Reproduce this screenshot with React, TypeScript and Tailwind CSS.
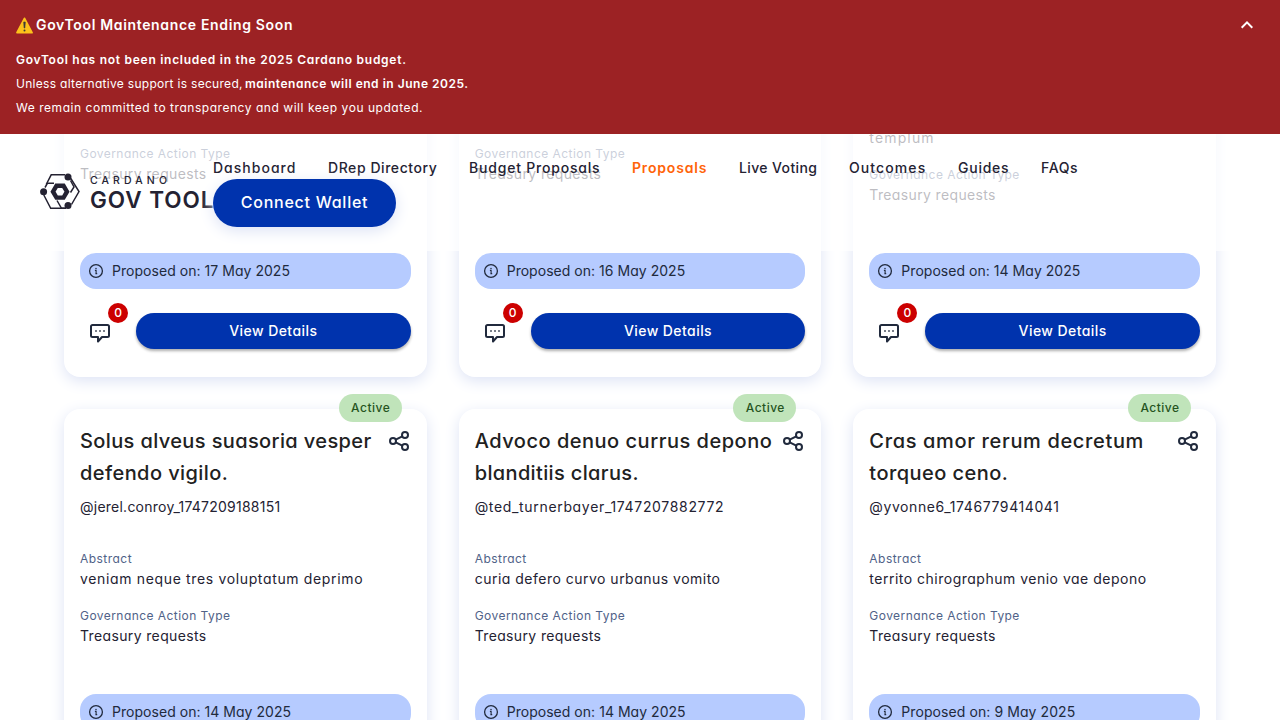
type Field = { text: string; tracking: string };

type Proposal = {
  title?: Field[];
  author?: Field;
  abstract?: Field;
  date: Field;
  /** Top padding used by cards whose heading is scrolled out of view. */
  offset?: string;
};

const proposals: Proposal[] = [
  { date: { text: "17 May 2025", tracking: "tracking-[0.04px]" }, offset: "pt-[178px]" },
  { date: { text: "16 May 2025", tracking: "tracking-[0.03px]" }, offset: "pt-[178px]" },
  {
    abstract: { text: "templum", tracking: "tracking-[1.15px]" },
    date: { text: "14 May 2025", tracking: "tracking-[0.035px]" },
    offset: "pt-[160px]",
  },
  {
    title: [
      { text: "Solus alveus suasoria vesper", tracking: "tracking-[0.38px]" },
      { text: "defendo vigilo.", tracking: "tracking-[0.43px]" },
    ],
    author: { text: "@jerel.conroy_1747209188151", tracking: "tracking-[0.24px]" },
    abstract: { text: "veniam neque tres voluptatum deprimo", tracking: "tracking-[0.65px]" },
    date: { text: "14 May 2025", tracking: "tracking-[0.035px]" },
  },
  {
    title: [
      { text: "Advoco denuo currus depono", tracking: "tracking-[0.51px]" },
      { text: "blanditiis clarus.", tracking: "tracking-[0.36px]" },
    ],
    author: { text: "@ted_turnerbayer_1747207882772", tracking: "tracking-[0.67px]" },
    abstract: { text: "curia defero curvo urbanus vomito", tracking: "tracking-[0.49px]" },
    date: { text: "14 May 2025", tracking: "tracking-[0.035px]" },
  },
  {
    title: [
      { text: "Cras amor rerum decretum", tracking: "tracking-[0.65px]" },
      { text: "torqueo ceno.", tracking: "tracking-[0.46px]" },
    ],
    author: { text: "@yvonne6_1746779414041", tracking: "tracking-[0.6px]" },
    abstract: { text: "territo chirographum venio vae depono", tracking: "tracking-[0.5px]" },
    date: { text: "9 May 2025", tracking: "tracking-[0.08px]" },
  },
];

const links = [
  { text: "Dashboard", style: "w-[83px] tracking-[1.02px] font-medium" },
  { text: "DRep Directory", style: "w-[109px] tracking-[0.56px] font-medium" },
  { text: "Budget Proposals", style: "w-[131px] tracking-[0.8px] font-medium" },
  { text: "Proposals", style: "w-[75px] tracking-[0.82px] font-semibold text-[#ff640a]" },
  { text: "Live Voting", style: "w-[78px] tracking-[0.37px] font-medium" },
  { text: "Outcomes", style: "w-[77px] tracking-[1.1px] font-medium" },
  { text: "Guides", style: "w-[51px] tracking-[0.75px] font-medium" },
  { text: "FAQs", style: "w-[37px] tracking-[0.65px] font-medium" },
];

function WarningIcon() {
  return (
    <svg width="17" height="17" viewBox="0 0 17 17" className="shrink-0">
      <path d="M8.5 1.4 16 15.6H1Z" fill="#fcc21b" stroke="#fcc21b" strokeWidth="1.8" strokeLinejoin="round" />
      <path d="M7.7 5h1.6L8.9 11H8.1Z" fill="#3a3a3a" stroke="#3a3a3a" strokeWidth=".6" strokeLinejoin="round" />
      <circle cx="8.5" cy="13.5" r="1" fill="#3a3a3a" />
    </svg>
  );
}

function ShareIcon() {
  return (
    <svg width="24" height="24" viewBox="0 0 24 24" fill="none" stroke="#212a3d" strokeWidth="2" className="shrink-0">
      <circle cx="6" cy="12" r="3" />
      <circle cx="18" cy="6" r="3" />
      <circle cx="18" cy="18" r="3" />
      <path d="m8.7 10.7 6.6-3.3M8.7 13.3l6.6 3.3" />
    </svg>
  );
}

function InfoIcon() {
  return (
    <svg width="16" height="16" viewBox="0 0 16 16" fill="none" stroke="#212a3d" strokeWidth="1.3" className="shrink-0">
      <circle cx="8" cy="8" r="6.4" />
      <path d="M6.9 7.4h1.2v3.2M7.4 10.6h1.8" strokeWidth="1.1" />
      <circle cx="8" cy="5.6" r=".75" fill="#212a3d" stroke="none" />
    </svg>
  );
}

function CommentIcon() {
  return (
    <svg width="24" height="24" viewBox="0 0 24 24" fill="none" stroke="#212a3d" strokeWidth="2" strokeLinejoin="round">
      <path d="M4.5 4h15A1.5 1.5 0 0 1 21 5.5v9a1.5 1.5 0 0 1-1.5 1.500H14L10 20.500V16H4.500A1.500 1.500 0 0 1 3 14.500v-9A1.500 1.500 0 0 1 4.500 4Z" />
      <path d="M7.200 10h1.600M11.200 10h1.600M15.200 10h1.600" strokeWidth="1.600" />
    </svg>
  );
}

function LogoMark() {
  return (
    <svg width="40" height="37" viewBox="0 0 40 37" fill="none" stroke="#242232" strokeWidth="1.5" className="mb-[3px] shrink-0">
      <path d="M6.200 11.500 11.200 1.800H25M30.800 5.500 39 18.500 31.500 31.500M26 35.300H10.700L3.800 22" />
      <path d="M5 14.500 7.500 10.200H14M30.500 7.500 34 14 30.500 19.500M17 27.500 21.500 35.300H26" />
      <path d="M16.500 12.800H23.500L27 18.700 23.500 24.600H16.500L13 18.700Z" strokeWidth="4.400" />
      <g fill="#242232" stroke="none">
        <circle cx="28" cy="4" r="3.500" />
        <circle cx="3.600" cy="18.700" r="3.500" />
        <circle cx="28" cy="32.500" r="3.500" />
      </g>
    </svg>
  );
}

function Banner() {
  return (
    <section className="h-[134px] bg-[#9c2224] px-4 pt-[13px] text-xs leading-6 text-white">
      <div className="flex h-6 items-center gap-[3px] text-sm font-semibold tracking-[0.66px]">
        <WarningIcon />
        <h2>GovTool Maintenance Ending Soon</h2>
        <svg width="24" height="24" viewBox="0 0 24 24" fill="none" stroke="white" strokeWidth="2" className="mr-[5px] ml-auto">
          <path d="m6.7 14.7 5.3-5.3 5.3 5.3" />
        </svg>
      </div>
      <div className="mt-[11px]">
        <p className="font-semibold tracking-[0.73px]">GovTool has not been included in the 2025 Cardano budget.</p>
        <p className="flex">
          <span className="w-[229px] tracking-[0.3px]">Unless alternative support is secured,</span>
          <strong className="font-semibold tracking-[0.52px]">maintenance will end in June 2025.</strong>
        </p>
        <p className="tracking-[0.54px]">We remain committed to transparency and will keep you updated.</p>
      </div>
    </section>
  );
}

function Header() {
  return (
    <header className="flex h-[117px] items-center bg-white/70 pl-10">
      <div className="flex w-[173px] shrink-0 items-center gap-[10px] whitespace-nowrap">
        <LogoMark />
        <div>
          <div className="text-[10.5px] leading-[14px] font-medium tracking-[4.1px]">CARDANO</div>
          <div className="text-[22.5px] leading-6 font-semibold tracking-[0.95px]">GOV TOOL</div>
        </div>
      </div>
      <div>
        <nav className="flex gap-8 pb-0.5 text-sm leading-[19px] whitespace-nowrap">
          {links.map((link) => (
            <a key={link.text} className={link.style}>
              {link.text}
            </a>
          ))}
        </nav>
        <button className="h-12 w-[183px] rounded-full bg-[#0033ad] pb-0.5 font-medium tracking-[0.75px] text-white shadow-[0_4px_15px_#dde3f5]">
          Connect Wallet
        </button>
      </div>
    </header>
  );
}

function Card({ proposal }: { proposal: Proposal }) {
  const { title, author, abstract, date, offset } = proposal;
  return (
    <article
      className={`relative flex h-[409px] flex-col rounded-2xl bg-white px-4 pb-7 whitespace-nowrap shadow-[0_4px_15px_#dde3f5] ${offset ?? "pt-4"}`}
    >
      {title && (
        <>
          <span className="absolute -top-[15px] right-[25px] flex h-7 w-[63px] items-center justify-center rounded-full bg-[#c0e4ba] pl-px text-xs font-medium tracking-[0.5px] text-[#26541f]">
            Active
          </span>
          <div className="flex justify-between">
            <h3 className="text-xl leading-8 font-medium text-[#212121]">
              {title.map((line) => (
                <span key={line.text} className={`block ${line.tracking}`}>
                  {line.text}
                </span>
              ))}
            </h3>
            <div className="-ml-4 pt-1">
              <ShareIcon />
            </div>
          </div>
        </>
      )}
      {author && <p className={`mt-2 mb-[34px] text-sm leading-5 ${author.tracking}`}>{author.text}</p>}
      {title && <p className="mb-0.5 text-xs leading-4 tracking-[0.47px] text-[#506288]">Abstract</p>}
      {abstract && <p className={`mb-[19px] text-sm leading-5 ${abstract.tracking}`}>{abstract.text}</p>}
      <p className="mb-0.5 text-xs leading-4 tracking-[0.45px] text-[#506288]">Governance Action Type</p>
      <p className="text-sm leading-5 tracking-[0.36px]">Treasury requests</p>
      <div className="mt-auto flex h-9 shrink-0 items-center gap-2 rounded-2xl bg-[#b6cbff] px-2 text-sm text-[#212a3d]">
        <InfoIcon />
        <span className={date.tracking}>Proposed on: {date.text}</span>
      </div>
      <div className="mt-6 flex h-9 shrink-0 gap-4">
        <div className="relative flex w-10 items-center justify-center pt-1">
          <CommentIcon />
          <span className="absolute -top-[10px] -right-2 flex size-5 items-center justify-center rounded-full bg-[#cc0000] text-xs font-medium text-white">
            0
          </span>
        </div>
        <button className="flex-1 rounded-full bg-[#0033ad] text-sm font-medium tracking-[0.43px] text-white shadow-[0_2px_3px_rgba(0,0,0,0.32)]">
          View Details
        </button>
      </div>
    </article>
  );
}

export default function App() {
  return (
    <div className="relative h-[720px] w-[1280px] overflow-hidden bg-white font-['Inter',sans-serif] text-[#242232] [font-feature-settings:'cv11']">
      <div className="absolute inset-x-0 top-0 z-10">
        <Banner />
        <Header />
      </div>
      <main className="-mt-8 grid grid-cols-3 gap-8 px-16">
        {proposals.map((proposal, index) => (
          <Card key={index} proposal={proposal} />
        ))}
      </main>
    </div>
  );
}
